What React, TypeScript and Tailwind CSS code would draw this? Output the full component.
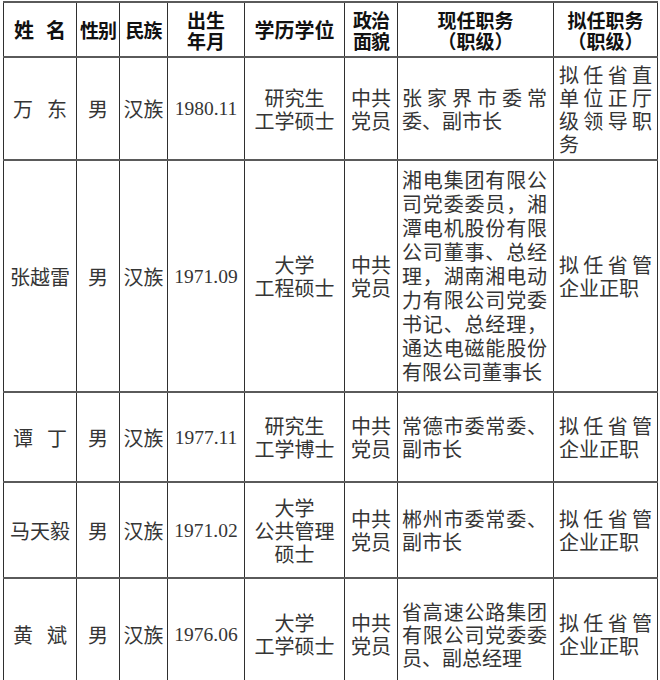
const cjk = "font-['Noto_Sans_CJK_SC','Noto_Sans_CJK_JP',sans-serif]";
const num = "font-['Liberation_Serif','Times_New_Roman',serif]";

type Row = {
  name: string[];
  birth: string;
  edu: string[];
  cur: string;
  next: string;
  h: string;
};

const rows: Row[] = [
  {
    name: ["万", "东"],
    birth: "1980.11",
    edu: ["研究生", "工学硕士"],
    cur: "张家界市委常委、副市长",
    next: "拟任省直单位正厅级领导职务",
    h: "h-[103px]",
  },
  {
    name: ["张越雷"],
    birth: "1971.09",
    edu: ["大学", "工程硕士"],
    cur: "湘电集团有限公司党委委员，湘潭电机股份有限公司董事、总经理，湖南湘电动力有限公司党委书记、总经理，通达电磁能股份有限公司董事长",
    next: "拟任省管企业正职",
    h: "h-[232px]",
  },
  {
    name: ["谭", "丁"],
    birth: "1977.11",
    edu: ["研究生", "工学博士"],
    cur: "常德市委常委、副市长",
    next: "拟任省管企业正职",
    h: "h-[90px]",
  },
  {
    name: ["马天毅"],
    birth: "1971.02",
    edu: ["大学", "公共管理", "硕士"],
    cur: "郴州市委常委、副市长",
    next: "拟任省管企业正职",
    h: "h-[96px]",
  },
  {
    name: ["黄", "斌"],
    birth: "1976.06",
    edu: ["大学", "工学硕士"],
    cur: "省高速公路集团有限公司党委委员、副总经理",
    next: "拟任省管企业正职",
    h: "h-[112px]",
  },
];

const cell = "border-x border-x-[#2f2f2f] border-y-2 border-y-[#5a5a5a] align-middle p-0";

export default function App() {
  return (
    <div lang="zh-CN" className={`h-[680px] w-[660px] overflow-hidden bg-white pl-[3px] pt-[1px] ${cjk}`}>
      <table className="w-[654px] table-fixed border-collapse border-t border-t-[#2f2f2f]">
        <colgroup>
          <col className="w-[73px]" />
          <col className="w-[43px]" />
          <col className="w-[48px]" />
          <col className="w-[77px]" />
          <col className="w-[100px]" />
          <col className="w-[53px]" />
          <col className="w-[156px]" />
          <col className="w-[104px]" />
        </colgroup>
        <thead>
          <tr className="h-[55px] text-[19px] font-bold leading-[21px] text-[#111]">
            <th className={`${cell} text-[20px]`}>
              <div className="flex justify-between px-[10px]">
                <span>姓</span>
                <span>名</span>
              </div>
            </th>
            <th className={`${cell} tracking-[-1px]`}>性别</th>
            <th className={`${cell} tracking-[-1px]`}>民族</th>
            <th className={cell}>
              出生
              <br />
              年月
            </th>
            <th className={`${cell} text-[20px]`}>学历学位</th>
            <th className={`${cell} tracking-[-1px]`}>
              政治
              <br />
              面貌
            </th>
            <th className={cell}>
              现任职务
              <br />
              （职级）
            </th>
            <th className={cell}>
              拟任职务
              <br />
              （职级）
            </th>
          </tr>
        </thead>
        <tbody className="text-[20px] leading-[23px] text-[#353535]">
          {rows.map((r) => (
            <tr key={r.birth} className={r.h}>
              <td className={cell}>
                {r.name.length === 2 ? (
                  <div className="flex justify-between px-[9px]">
                    <span>{r.name[0]}</span>
                    <span>{r.name[1]}</span>
                  </div>
                ) : (
                  <div className="text-center">{r.name[0]}</div>
                )}
              </td>
              <td className={`${cell} text-center`}>男</td>
              <td className={`${cell} text-center`}>汉族</td>
              <td className={`${cell} text-center ${num} text-[19.5px]`}>{r.birth}</td>
              <td className={`${cell} text-center`}>
                {r.edu.map((e) => (
                  <div key={e}>{e}</div>
                ))}
              </td>
              <td className={`${cell} text-center`}>
                <div>中共</div>
                <div>党员</div>
              </td>
              <td className={`${cell} pl-[4px] pr-[6px] text-justify ${r.cur.length > 40 ? "leading-[24px]" : ""}`}>
                {r.cur}
              </td>
              <td className={`${cell} px-[5px] text-justify`}>{r.next}</td>
            </tr>
          ))}
        </tbody>
      </table>
    </div>
  );
}
